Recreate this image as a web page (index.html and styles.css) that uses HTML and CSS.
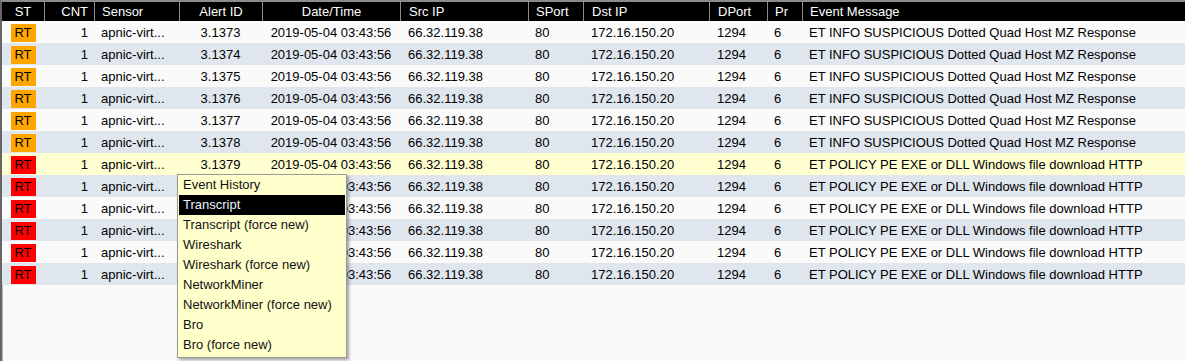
FILE: index.html
```html
<!DOCTYPE html>
<html lang="en">
<head>
    <meta charset="UTF-8">
    <title>Events</title>
    <link rel="stylesheet" href="styles.css">
</head>
<body>
    <div class="panel">
        <div class="row head">
            <div class="c center">ST</div>
            <div class="c right">CNT</div>
            <div class="c">Sensor</div>
            <div class="c center">Alert ID</div>
            <div class="c center">Date/Time</div>
            <div class="c wide">Src IP</div>
            <div class="c">SPort</div>
            <div class="c wide">Dst IP</div>
            <div class="c wide">DPort</div>
            <div class="c">Pr</div>
            <div class="c">Event Message</div>
        </div>

        <div class="row">
            <div class="c center"><span class="st warn">RT</span></div>
            <div class="c right">1</div><div class="c">apnic-virt...</div><div class="c center">3.1373</div>
            <div class="c center">2019-05-04 03:43:56</div><div class="c wide">66.32.119.38</div><div class="c">80</div>
            <div class="c wide">172.16.150.20</div><div class="c wide">1294</div><div class="c">6</div>
            <div class="c">ET INFO SUSPICIOUS Dotted Quad Host MZ Response</div>
        </div>
        <div class="row">
            <div class="c center"><span class="st warn">RT</span></div>
            <div class="c right">1</div><div class="c">apnic-virt...</div><div class="c center">3.1374</div>
            <div class="c center">2019-05-04 03:43:56</div><div class="c wide">66.32.119.38</div><div class="c">80</div>
            <div class="c wide">172.16.150.20</div><div class="c wide">1294</div><div class="c">6</div>
            <div class="c">ET INFO SUSPICIOUS Dotted Quad Host MZ Response</div>
        </div>
        <div class="row">
            <div class="c center"><span class="st warn">RT</span></div>
            <div class="c right">1</div><div class="c">apnic-virt...</div><div class="c center">3.1375</div>
            <div class="c center">2019-05-04 03:43:56</div><div class="c wide">66.32.119.38</div><div class="c">80</div>
            <div class="c wide">172.16.150.20</div><div class="c wide">1294</div><div class="c">6</div>
            <div class="c">ET INFO SUSPICIOUS Dotted Quad Host MZ Response</div>
        </div>
        <div class="row">
            <div class="c center"><span class="st warn">RT</span></div>
            <div class="c right">1</div><div class="c">apnic-virt...</div><div class="c center">3.1376</div>
            <div class="c center">2019-05-04 03:43:56</div><div class="c wide">66.32.119.38</div><div class="c">80</div>
            <div class="c wide">172.16.150.20</div><div class="c wide">1294</div><div class="c">6</div>
            <div class="c">ET INFO SUSPICIOUS Dotted Quad Host MZ Response</div>
        </div>
        <div class="row">
            <div class="c center"><span class="st warn">RT</span></div>
            <div class="c right">1</div><div class="c">apnic-virt...</div><div class="c center">3.1377</div>
            <div class="c center">2019-05-04 03:43:56</div><div class="c wide">66.32.119.38</div><div class="c">80</div>
            <div class="c wide">172.16.150.20</div><div class="c wide">1294</div><div class="c">6</div>
            <div class="c">ET INFO SUSPICIOUS Dotted Quad Host MZ Response</div>
        </div>
        <div class="row">
            <div class="c center"><span class="st warn">RT</span></div>
            <div class="c right">1</div><div class="c">apnic-virt...</div><div class="c center">3.1378</div>
            <div class="c center">2019-05-04 03:43:56</div><div class="c wide">66.32.119.38</div><div class="c">80</div>
            <div class="c wide">172.16.150.20</div><div class="c wide">1294</div><div class="c">6</div>
            <div class="c">ET INFO SUSPICIOUS Dotted Quad Host MZ Response</div>
        </div>
        <div class="row selected">
            <div class="c center"><span class="st crit">RT</span></div>
            <div class="c right">1</div><div class="c">apnic-virt...</div><div class="c center">3.1379</div>
            <div class="c center">2019-05-04 03:43:56</div><div class="c wide">66.32.119.38</div><div class="c">80</div>
            <div class="c wide">172.16.150.20</div><div class="c wide">1294</div><div class="c">6</div>
            <div class="c">ET POLICY PE EXE or DLL Windows file download HTTP</div>
        </div>
        <div class="row">
            <div class="c center"><span class="st crit">RT</span></div>
            <div class="c right">1</div><div class="c">apnic-virt...</div><div class="c center">3.1380</div>
            <div class="c center">2019-05-04 03:43:56</div><div class="c wide">66.32.119.38</div><div class="c">80</div>
            <div class="c wide">172.16.150.20</div><div class="c wide">1294</div><div class="c">6</div>
            <div class="c">ET POLICY PE EXE or DLL Windows file download HTTP</div>
        </div>
        <div class="row">
            <div class="c center"><span class="st crit">RT</span></div>
            <div class="c right">1</div><div class="c">apnic-virt...</div><div class="c center">3.1381</div>
            <div class="c center">2019-05-04 03:43:56</div><div class="c wide">66.32.119.38</div><div class="c">80</div>
            <div class="c wide">172.16.150.20</div><div class="c wide">1294</div><div class="c">6</div>
            <div class="c">ET POLICY PE EXE or DLL Windows file download HTTP</div>
        </div>
        <div class="row">
            <div class="c center"><span class="st crit">RT</span></div>
            <div class="c right">1</div><div class="c">apnic-virt...</div><div class="c center">3.1382</div>
            <div class="c center">2019-05-04 03:43:56</div><div class="c wide">66.32.119.38</div><div class="c">80</div>
            <div class="c wide">172.16.150.20</div><div class="c wide">1294</div><div class="c">6</div>
            <div class="c">ET POLICY PE EXE or DLL Windows file download HTTP</div>
        </div>
        <div class="row">
            <div class="c center"><span class="st crit">RT</span></div>
            <div class="c right">1</div><div class="c">apnic-virt...</div><div class="c center">3.1383</div>
            <div class="c center">2019-05-04 03:43:56</div><div class="c wide">66.32.119.38</div><div class="c">80</div>
            <div class="c wide">172.16.150.20</div><div class="c wide">1294</div><div class="c">6</div>
            <div class="c">ET POLICY PE EXE or DLL Windows file download HTTP</div>
        </div>
        <div class="row">
            <div class="c center"><span class="st crit">RT</span></div>
            <div class="c right">1</div><div class="c">apnic-virt...</div><div class="c center">3.1384</div>
            <div class="c center">2019-05-04 03:43:56</div><div class="c wide">66.32.119.38</div><div class="c">80</div>
            <div class="c wide">172.16.150.20</div><div class="c wide">1294</div><div class="c">6</div>
            <div class="c">ET POLICY PE EXE or DLL Windows file download HTTP</div>
        </div>
    </div>

    <!-- context menu for the selected event -->
    <ul class="menu">
        <li>Event History</li>
        <li class="active">Transcript</li>
        <li>Transcript (force new)</li>
        <li>Wireshark</li>
        <li>Wireshark (force new)</li>
        <li>NetworkMiner</li>
        <li>NetworkMiner (force new)</li>
        <li>Bro</li>
        <li>Bro (force new)</li>
    </ul>
</body>
</html>
```

FILE: styles.css
```css
html, body {
    margin: 0;
    height: 100%;
}
body {
    font-family: "Liberation Sans", Arial, sans-serif;
    font-size: 13px;
    color: #000;
    background-color: #fafafa;
    overflow: hidden;
}
.panel {
    height: 100%;
    box-sizing: border-box;
    border-top: 2px solid #8c8c8c;
    border-left: 2px solid #666;
    box-shadow: inset 1px 0 0 #b4b4b4;
}
.row {
    display: grid;
    grid-template-columns: 42px 50px 85px 83px 138px 128px 55px 126px 58px 35px 1fr;
    height: 22px;
    align-items: center;
    background-color: #fafafa;
}
.row:nth-child(odd) {
    background-color: #dfe6ee;
}
.row.selected {
    background-color: #ffffd2;
}
.row.head {
    height: 19px;
    background-color: #000;
    color: #fff;
}
.c {
    white-space: nowrap;
    overflow: hidden;
    padding: 0 6px 0 7px;
    box-sizing: border-box;
    line-height: 19px;
}
.c.wide {
    padding-left: 8px;
}
.head .c {
    line-height: 20px;
}
.head .c + .c {
    border-left: 1px solid #8c8c8c;
    height: 19px;
}
.center {
    text-align: center;
    padding: 0;
}
.right {
    text-align: right;
}
.st {
    display: inline-block;
    width: 25px;
    height: 18px;
    line-height: 18px;
    text-align: center;
    color: #000;
}
.st.warn {
    background-color: #ffa500;
}
.st.crit {
    background-color: #ff0000;
}
.menu {
    position: absolute;
    left: 177px;
    top: 174px;
    width: 170px;
    margin: 0;
    padding: 0 1px 2px;
    list-style: none;
    box-sizing: border-box;
    background-color: #ffffcc;
    border: 1px solid #9a9a9a;
    box-shadow: 2px 2px 3px rgba(0, 0, 0, 0.35);
}
.menu li {
    height: 20px;
    line-height: 19px;
    padding-left: 4px;
    color: #111;
}
.menu li.active {
    background-color: #000;
    color: #e8f2ff;
}
```
